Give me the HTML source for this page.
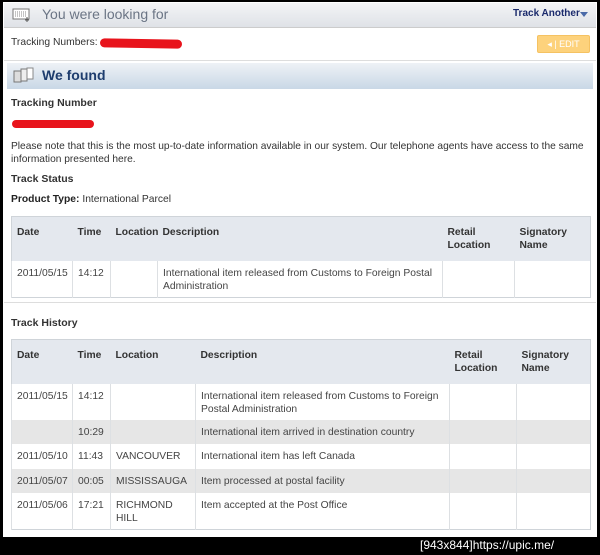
<!DOCTYPE html>
<html><head><meta charset="utf-8"><style>
*{margin:0;padding:0;box-sizing:border-box}
body{width:600px;height:555px;background:#000;position:relative;overflow:hidden;font-family:"Liberation Sans",Arial,sans-serif;font-size:11px;color:#333}
.a{position:absolute}
.page{left:3px;top:2px;width:594px;height:535px;background:#fff}
table{position:absolute;border-collapse:collapse;table-layout:fixed;border:1px solid #cfd4d9}
td,th{vertical-align:top;padding:6px 5px 2px;text-align:left;border-left:1px solid #dde0e3;font-size:10.3px;line-height:13px}
th{background:#e4e8ee;font-weight:bold;color:#333;border-left:none;padding-top:9px}
td{color:#444}
tr.g td{background:#e6e6e6}
b{color:#222}
</style></head><body>
<div class="a page"></div>
<div class="a" style="left:4px;top:3px;width:592px;height:25px;background:linear-gradient(#f3f4f6,#dfe2e7);border-bottom:1px solid #ccc"></div>
<svg class="a" style="left:12px;top:7px" width="20" height="16"><rect x="1" y="2" width="16" height="10" fill="#fff" stroke="#777"/><path d="M3 5h12M3 7h12M3 9h12" stroke="#888" stroke-dasharray="1 1"/><path d="M15 10v5M13 13h4" stroke="#555"/></svg>
<div class="a" style="left:42px;top:6px;font-size:14px;color:#6b7585">You were looking for</div>
<div class="a" style="left:513px;top:8px;font-size:10px;font-weight:bold;color:#1a2a6c">Track Another</div>
<div class="a" style="left:580px;top:12px;width:0;height:0;border-left:4px solid transparent;border-right:4px solid transparent;border-top:5px solid #4a6aa8"></div>
<div class="a" style="left:11px;top:37px;font-size:10.3px;color:#333">Tracking Numbers:</div>
<div class="a" style="left:100px;top:39px;width:82px;height:9px;background:#e8141c;border-radius:5px;transform:rotate(1deg)"></div>
<div class="a" style="left:537px;top:35px;width:53px;height:18px;background:#fdd27c;border:1px solid #f5c262;border-radius:2px;color:#fff;font-size:9px;line-height:16px;text-align:center">◂ | EDIT</div>
<div class="a" style="left:4px;top:60px;width:592px;height:1px;background:#ddd"></div>
<div class="a" style="left:7px;top:63px;width:586px;height:26px;background:linear-gradient(#eef2f6,#c9d8e6)"></div>
<svg class="a" style="left:13px;top:67px" width="22" height="18"><rect x="1" y="4" width="7" height="11" fill="#ddd" stroke="#777"/><rect x="8" y="2" width="6" height="12" fill="#eee" stroke="#777"/><rect x="14" y="1" width="6" height="11" fill="#fff" stroke="#888"/></svg>
<div class="a" style="left:42px;top:67px;font-size:14px;font-weight:bold;color:#1e3d6e">We found</div>
<div class="a" style="left:11px;top:97px;font-weight:bold;font-size:10.5px">Tracking Number</div>
<div class="a" style="left:12px;top:120px;width:82px;height:8px;background:#e8141c;border-radius:5px"></div>
<div class="a" style="left:11px;top:140px;width:580px;line-height:13px;color:#333;font-size:10.2px">Please note that this is the most up-to-date information available in our system. Our telephone agents have access to the same information presented here.</div>
<div class="a" style="left:11px;top:173px;font-weight:bold;font-size:10.5px">Track Status</div>
<div class="a" style="left:11px;top:194px;font-size:10.3px"><b>Product Type:</b> International Parcel</div>
<table style="left:11px;top:216px;width:580px">
<colgroup><col style="width:61px"><col style="width:38px"><col style="width:47px"><col style="width:285px"><col style="width:72px"><col></colgroup>
<tr style="height:44px"><th>Date</th><th>Time</th><th>Location</th><th>Description</th><th>Retail Location</th><th>Signatory Name</th></tr>
<tr style="height:37px"><td>2011/05/15</td><td>14:12</td><td></td><td>International item released from Customs to Foreign Postal Administration</td><td></td><td></td></tr>
</table>
<div class="a" style="left:4px;top:302px;width:592px;height:1px;background:#ddd"></div>
<div class="a" style="left:11px;top:317px;font-weight:bold;font-size:10.5px">Track History</div>
<table style="left:11px;top:339px;width:580px">
<colgroup><col style="width:61px"><col style="width:38px"><col style="width:85px"><col style="width:254px"><col style="width:67px"><col></colgroup>
<tr style="height:44px"><th>Date</th><th>Time</th><th>Location</th><th>Description</th><th>Retail Location</th><th>Signatory Name</th></tr>
<tr style="height:36px"><td>2011/05/15</td><td>14:12</td><td></td><td>International item released from Customs to Foreign Postal Administration</td><td></td><td></td></tr>
<tr class="g" style="height:24px"><td></td><td>10:29</td><td></td><td>International item arrived in destination country</td><td></td><td></td></tr>
<tr style="height:25px"><td>2011/05/10</td><td>11:43</td><td>VANCOUVER</td><td>International item has left Canada</td><td></td><td></td></tr>
<tr class="g" style="height:24px"><td>2011/05/07</td><td>00:05</td><td>MISSISSAUGA</td><td>Item processed at postal facility</td><td></td><td></td></tr>
<tr style="height:37px"><td>2011/05/06</td><td>17:21</td><td>RICHMOND HILL</td><td>Item accepted at the Post Office</td><td></td><td></td></tr>
</table>
<div class="a" style="left:420px;top:538px;font-family:'Liberation Sans',sans-serif;font-size:12px;color:#fff">[943x844]https://upic.me/</div>
</body></html>
